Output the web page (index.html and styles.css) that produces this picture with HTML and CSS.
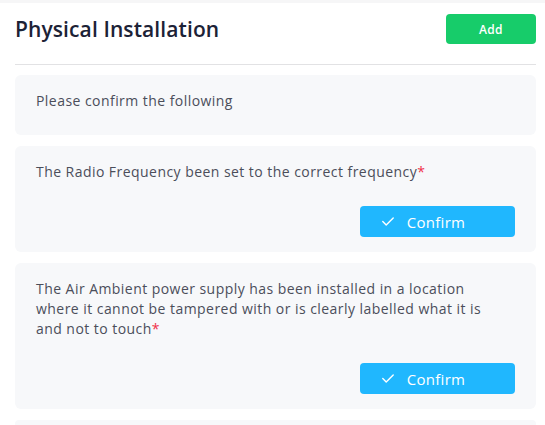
FILE: index.html
```html
<!DOCTYPE html>
<html>
<head>
<meta charset="utf-8">
<link rel="stylesheet" href="styles.css">
</head>
<body>
<div class="topstrip"></div>
<section class="panel">
  <header class="panel-head">
    <h1 class="title">Physical Installation</h1>
    <button class="btn-add">Add</button>
  </header>
  <div class="list">
    <div class="card card-intro">
      <p class="card-text">Please confirm the following</p>
    </div>
    <div class="card">
      <p class="card-text">The Radio Frequency been set to the correct frequency<span class="req">*</span></p>
      <div class="card-actions">
        <button class="btn-confirm"><svg class="check" viewBox="0 0 12 9" width="12" height="9"><path d="M0.8 4.6 L4.2 7.9 L11.2 1" fill="none" stroke="#fff" stroke-width="1.4" stroke-linecap="round" stroke-linejoin="round"/></svg><span>Confirm</span></button>
      </div>
    </div>
    <div class="card">
      <p class="card-text">The Air Ambient power supply has been installed in a location where it cannot be tampered with or is clearly labelled what it is and not to touch<span class="req">*</span></p>
      <div class="card-actions">
        <button class="btn-confirm"><svg class="check" viewBox="0 0 12 9" width="12" height="9"><path d="M0.8 4.6 L4.2 7.9 L11.2 1" fill="none" stroke="#fff" stroke-width="1.4" stroke-linecap="round" stroke-linejoin="round"/></svg><span>Confirm</span></button>
      </div>
    </div>
    <div class="card card-next"></div>
  </div>
</section>
</body>
</html>
```
FILE: styles.css
```css
* { box-sizing: border-box; }
html, body { margin: 0; padding: 0; background: #fff; }
body {
  font-family: "Open Sans", "Noto Sans", sans-serif;
  color: #4a4a55;
  overflow: hidden;
  height: 425px;
}
.topstrip {
  height: 3px;
  background: #f6f6f7;
}
.panel {
  padding: 11px 9px 0 15px;
}
.panel-head {
  display: flex;
  justify-content: space-between;
  align-items: center;
  height: 30px;
}
.title {
  margin: 0;
  font-size: 21px;
  font-weight: 600;
  color: #1c2236;
  letter-spacing: 0.1px;
}
.btn-add {
  width: 90px;
  height: 30px;
  border: 0;
  border-radius: 4px;
  background: #17cc6a;
  color: #fff;
  font-family: inherit;
  font-size: 12px;
  font-weight: 600;
  letter-spacing: 0.3px;
  padding: 0;
}
.list {
  margin-top: 20px;
  border-top: 1px solid #e2e2e4;
  padding-top: 10px;
  display: flex;
  flex-direction: column;
  gap: 11px;
}
.card {
  background: #f7f8fa;
  border-radius: 6px;
  padding: 16px 21px 15px;
}
.card-intro { padding-bottom: 24px; }
.card-text {
  margin: 0;
  max-width: 470px;
  font-size: 14px;
  line-height: 20px;
  letter-spacing: 0.45px;
  color: #4b4e5a;
}
.req { color: #f0304a; }
.card-actions {
  display: flex;
  justify-content: flex-end;
  margin-top: 24px;
}
.btn-confirm {
  width: 155px;
  height: 31px;
  border: 0;
  border-radius: 4px;
  background: #20b7fe;
  color: #fff;
  font-family: inherit;
  font-size: 15px;
  letter-spacing: 0.3px;
  display: flex;
  align-items: center;
  justify-content: center;
  gap: 13px;
  padding: 0 28px 0 0;
}
.check { display: block; }
.card-next { height: 8px; padding: 0; }
```
